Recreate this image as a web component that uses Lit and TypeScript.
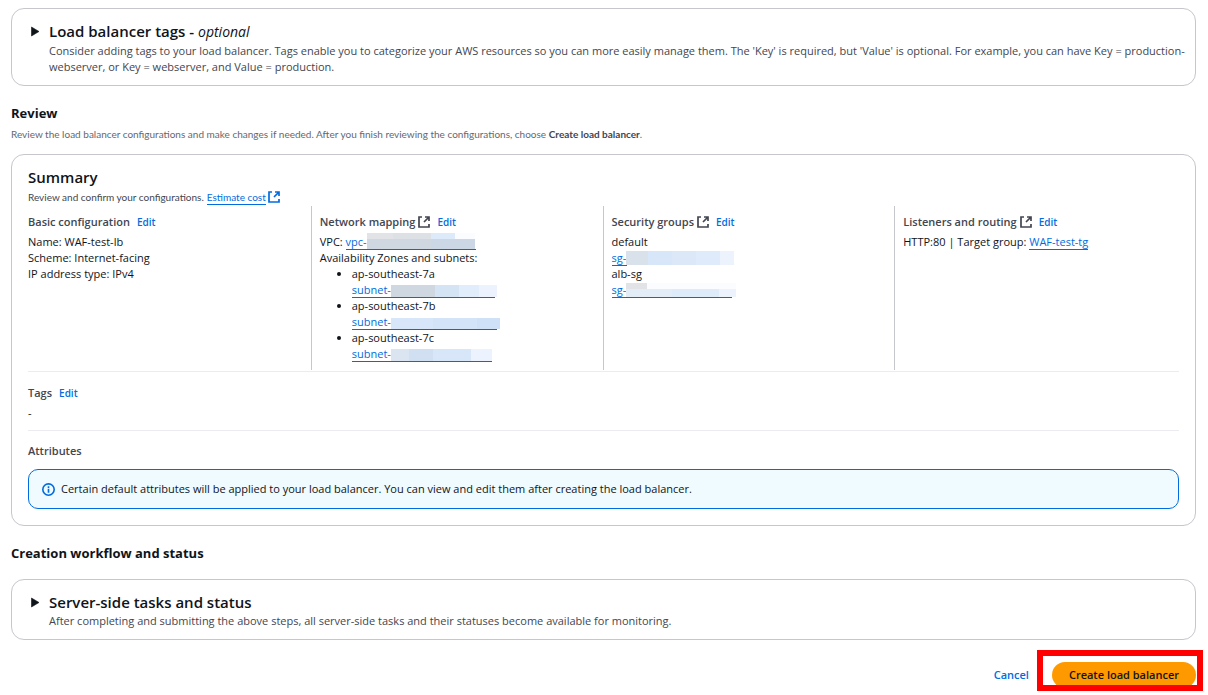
import { LitElement, html, css, svg, nothing } from "lit";
import { customElement, property } from "lit/decorators.js";
import { styleMap } from "lit/directives/style-map.js";

interface Tile {
  color: string;
  width: number;
}

const tiles = (...pairs: [string, number][]): Tile[] =>
  pairs.map(([color, width]) => ({ color, width }));

const externalIcon = html`<svg class="external" viewBox="0 0 12 12" aria-hidden="true">
  ${svg`<path d="M4 1H1v10h10V8M7 1h4v4M11 1L6 6" fill="none" stroke="currentColor" stroke-width="1.7"/>`}
</svg>`;

/** A resource link whose identifier is masked by a strip of flat tiles. */
@customElement("masked-link")
export class MaskedLink extends LitElement {
  @property() label = "";
  @property({ attribute: false }) top: Tile[] = [];
  @property({ attribute: false }) main: Tile[] = [];
  @property({ attribute: false }) height = 12;
  @property({ attribute: false }) line = 0;

  static styles = css`
    :host { display: inline-block; height: 16px; vertical-align: top; }
    .link {
      display: flex;
      position: relative;
      height: 16px;
      color: #006ce0;
      text-decoration: none;
      white-space: nowrap;
    }
    .rule { position: absolute; left: 0; bottom: 0; height: 1px; background: #006ce0; }
    .mask { display: flex; flex-direction: column; justify-content: flex-end; height: 15px; }
    .strip { display: flex; }
    .upper { height: 6px; margin-top: -6px; }
  `;

  private strip(list: Tile[], height: number, name: string) {
    return html`<span class="strip ${name}">
      ${list.map((t) => html`<span style=${styleMap({ width: `${t.width}px`, height: `${height}px`, background: t.color })}></span>`)}
    </span>`;
  }

  render() {
    return html`<a class="link" href="#">
      <span>${this.label}</span>
      <span class="mask" aria-hidden="true">
        ${this.top.length ? this.strip(this.top, 6, "upper") : nothing}
        ${this.strip(this.main, this.height, "lower")}
      </span>
      <span class="rule" style=${styleMap({ width: `${this.line}px` })}></span>
    </a>`;
  }
}

const masked = (label: string, line: number, height: number, main: Tile[], top: Tile[] = []) =>
  html`<masked-link .label=${label} .line=${line} .height=${height} .main=${main} .top=${top}></masked-link>`;

const subnets = [
  { zone: "ap-southeast-7a", line: 143, height: 12, mask: tiles(["#cfd7e0", 44], ["#d5e4f5", 24], ["#e1edfb", 20], ["#ecf3fe", 18]) },
  { zone: "ap-southeast-7b", line: 145, height: 11, mask: tiles(["#d7e6f8", 42], ["#d3e4f9", 44], ["#cfe1f7", 23]) },
  { zone: "ap-southeast-7c", line: 140, height: 12, mask: tiles(["#dae5f1", 18], ["#d0e0f2", 24], ["#d7e6f8", 38], ["#ecf3fe", 21]) },
];

@customElement("app-root")
export class AppRoot extends LitElement {
  static styles = css`
    :host {
      display: block;
      color: #0f141a;
      background: #fff;
      font: 11px/16px "Open Sans", "Noto Sans", sans-serif;
    }
    * { box-sizing: border-box; }
    h1, h2, h3, p, ul { margin: 0; padding: 0; font-size: inherit; }
    a { color: #006ce0; text-decoration: none; }
    .page { padding: 8px 12px 4px 11px; }
    .card { border: 1px solid #c6c6cd; border-radius: 13px; padding: 12px 16px 16px; }
    .title { font-size: 15px; line-height: 20px; font-weight: 600; }
    .title em { font-size: 14px; font-weight: 400; }
    .expander > summary {
      display: grid;
      grid-template-columns: 14px 1fr;
      column-gap: 7px;
      list-style: none;
      cursor: pointer;
    }
    .card.expander { padding: 13px 0 10px 16px; }
    .expander .title { line-height: 18px; }
    .caret { width: 14px; height: 18px; fill: #0f141a; }
    .desc { grid-column: 2; margin-top: 2px; color: #424650; }
    .section { font-size: 13px; line-height: 20px; font-weight: 700; }
    .review { margin-top: 17px; }
    .hint, .sub { font-family: Lato, "Open Sans", sans-serif; font-size: 10px; }
    .hint { margin: 3px 0 12px; color: #656871; }
    .hint b { color: #424650; font-weight: 700; }
    .sub { display: flex; gap: 3px; margin: 2px 0 1px; color: #424650; }
    .external { width: 12px; height: 12px; flex: none; }
    .estimate { display: flex; align-items: center; gap: 2px; }
    .underlined { border-bottom: 1px solid #006ce0; display: inline-block; height: 16px; vertical-align: top; }
    .columns {
      display: grid;
      grid-template-columns: repeat(4, 1fr);
      column-gap: 16px;
      border-bottom: 1px solid #ebebf0;
      padding-bottom: 1px;
    }
    .column { padding: 8px 0; }
    .column + .column { border-left: 1px solid #c6c6cd; margin-left: -9px; padding-left: 8px; }
    .label { display: flex; align-items: center; margin-bottom: 4px; color: #424650; font-weight: 600; }
    .label h3 { font-weight: 600; }
    .label .external { margin-left: 3px; }
    .edit { margin-left: 7px; font-size: 10px; font-weight: 600; }
    .zones { padding-left: 32px; }
    .block { padding: 13px 0 9px; border-bottom: 1px solid #ebebf0; }
    .attributes { padding-top: 12px; }
    .alert {
      display: flex;
      align-items: center;
      gap: 6px;
      margin-top: 10px;
      padding: 11px 13px;
      border: 1px solid #006ce0;
      border-radius: 10px;
      background: #f0fbff;
    }
    .info { width: 13px; height: 13px; color: #006ce0; flex: none; }
    .workflow { margin: 17px 0 16px; }
    .actions { display: flex; justify-content: flex-end; align-items: center; gap: 23px; margin-top: 22px; }
    button { font: inherit; font-weight: 600; cursor: pointer; border: 0; background: none; padding: 0; }
    .cancel { color: #006ce0; }
    .primary { height: 26px; padding: 0 17px; border-radius: 13px; background: #ff9900; color: #0f141a; }
    .marked { position: relative; }
    .frame { position: absolute; inset: -12px -7px -3px -15px; border: 6px solid #f00; pointer-events: none; }
  `;

  private expander(title: unknown, text: string) {
    return html`<details class="card expander">
      <summary>
        <svg class="caret" viewBox="0 0 14 18" aria-hidden="true"><path d="M3.5 5l7.5 4.5L3.5 14z" stroke="#0f141a" stroke-width=".6" stroke-linejoin="round"/></svg>
        <h2 class="title">${title}</h2>
        <p class="desc">${text}</p>
      </summary>
    </details>`;
  }

  private label(text: string, external = false, edit = true) {
    return html`<div class="label">
      <h3>${text}</h3>
      ${external ? externalIcon : nothing}
      ${edit ? html`<a class="edit" href="#" aria-label="Edit ${text}">Edit</a>` : nothing}
    </div>`;
  }

  render() {
    return html`<main class="page">
      ${this.expander(
        html`Load balancer tags - <em>optional</em>`,
        "Consider adding tags to your load balancer. Tags enable you to categorize your AWS resources so you can more easily manage them. The 'Key' is required, but 'Value' is optional. For example, you can have Key = production-webserver, or Key = webserver, and Value = production.",
      )}

      <h2 class="section review">Review</h2>
      <p class="hint">Review the load balancer configurations and make changes if needed. After you finish reviewing the configurations, choose <b>Create load balancer</b>.</p>

      <section class="card">
        <h2 class="title">Summary</h2>
        <div class="sub">
          <span>Review and confirm your configurations.</span>
          <a class="estimate" href="#"><span class="underlined">Estimate cost</span>${externalIcon}</a>
        </div>
        <div class="columns">
          <div class="column">
            ${this.label("Basic configuration")}
            <p>Name: WAF-test-lb</p>
            <p>Scheme: Internet-facing</p>
            <p>IP address type: IPv4</p>
          </div>
          <div class="column">
            ${this.label("Network mapping", true)}
            <p>VPC: ${masked("vpc-", 130, 10, tiles(["#cfd7e0", 64], ["#cbd7e4", 44]), tiles(["#e1e3e7", 26], ["#dde1e6", 38], ["#dceafa", 24], ["#fafcff", 20]))}</p>
            <p>Availability Zones and subnets:</p>
            <ul class="zones">
              ${subnets.map((s) => html`<li>${s.zone}<br />${masked("subnet-", s.line, s.height, s.mask)}</li>`)}
            </ul>
          </div>
          <div class="column">
            ${this.label("Security groups", true)}
            <p>default</p>
            <p>${masked("sg-", 15, 14, tiles(["#d9e1ea", 22], ["#d7e6f8", 24], ["#dce8f8", 24], ["#dfebfa", 24], ["#edf3fd", 14]))}</p>
            <p>alb-sg</p>
            <p>${masked("sg-", 120, 8, tiles(["#e2edf8", 46], ["#deebf8", 47], ["#edf3fd", 17]), tiles(["#e1e3e6", 21], ["#fbfcff", 89]))}</p>
          </div>
          <div class="column">
            ${this.label("Listeners and routing", true)}
            <p>HTTP:80 | Target group: <a class="underlined" href="#">WAF-test-tg</a></p>
          </div>
        </div>
        <div class="block">
          ${this.label("Tags")}
          <p>-</p>
        </div>
        <div class="attributes">
          ${this.label("Attributes", false, false)}
          <div class="alert" role="note">
            <svg class="info" viewBox="0 0 16 16" fill="none" stroke="currentColor" stroke-width="2" aria-hidden="true"><circle cx="8" cy="8" r="7"/><path d="M8 12V7M8 6V4"/></svg>
            <p>Certain default attributes will be applied to your load balancer. You can view and edit them after creating the load balancer.</p>
          </div>
        </div>
      </section>

      <h2 class="section workflow">Creation workflow and status</h2>
      ${this.expander(
        "Server-side tasks and status",
        "After completing and submitting the above steps, all server-side tasks and their statuses become available for monitoring.",
      )}

      <div class="actions">
        <button class="cancel" type="button">Cancel</button>
        <div class="marked">
          <button class="primary" type="button">Create load balancer</button>
          <div class="frame"></div>
        </div>
      </div>
    </main>`;
  }
}
